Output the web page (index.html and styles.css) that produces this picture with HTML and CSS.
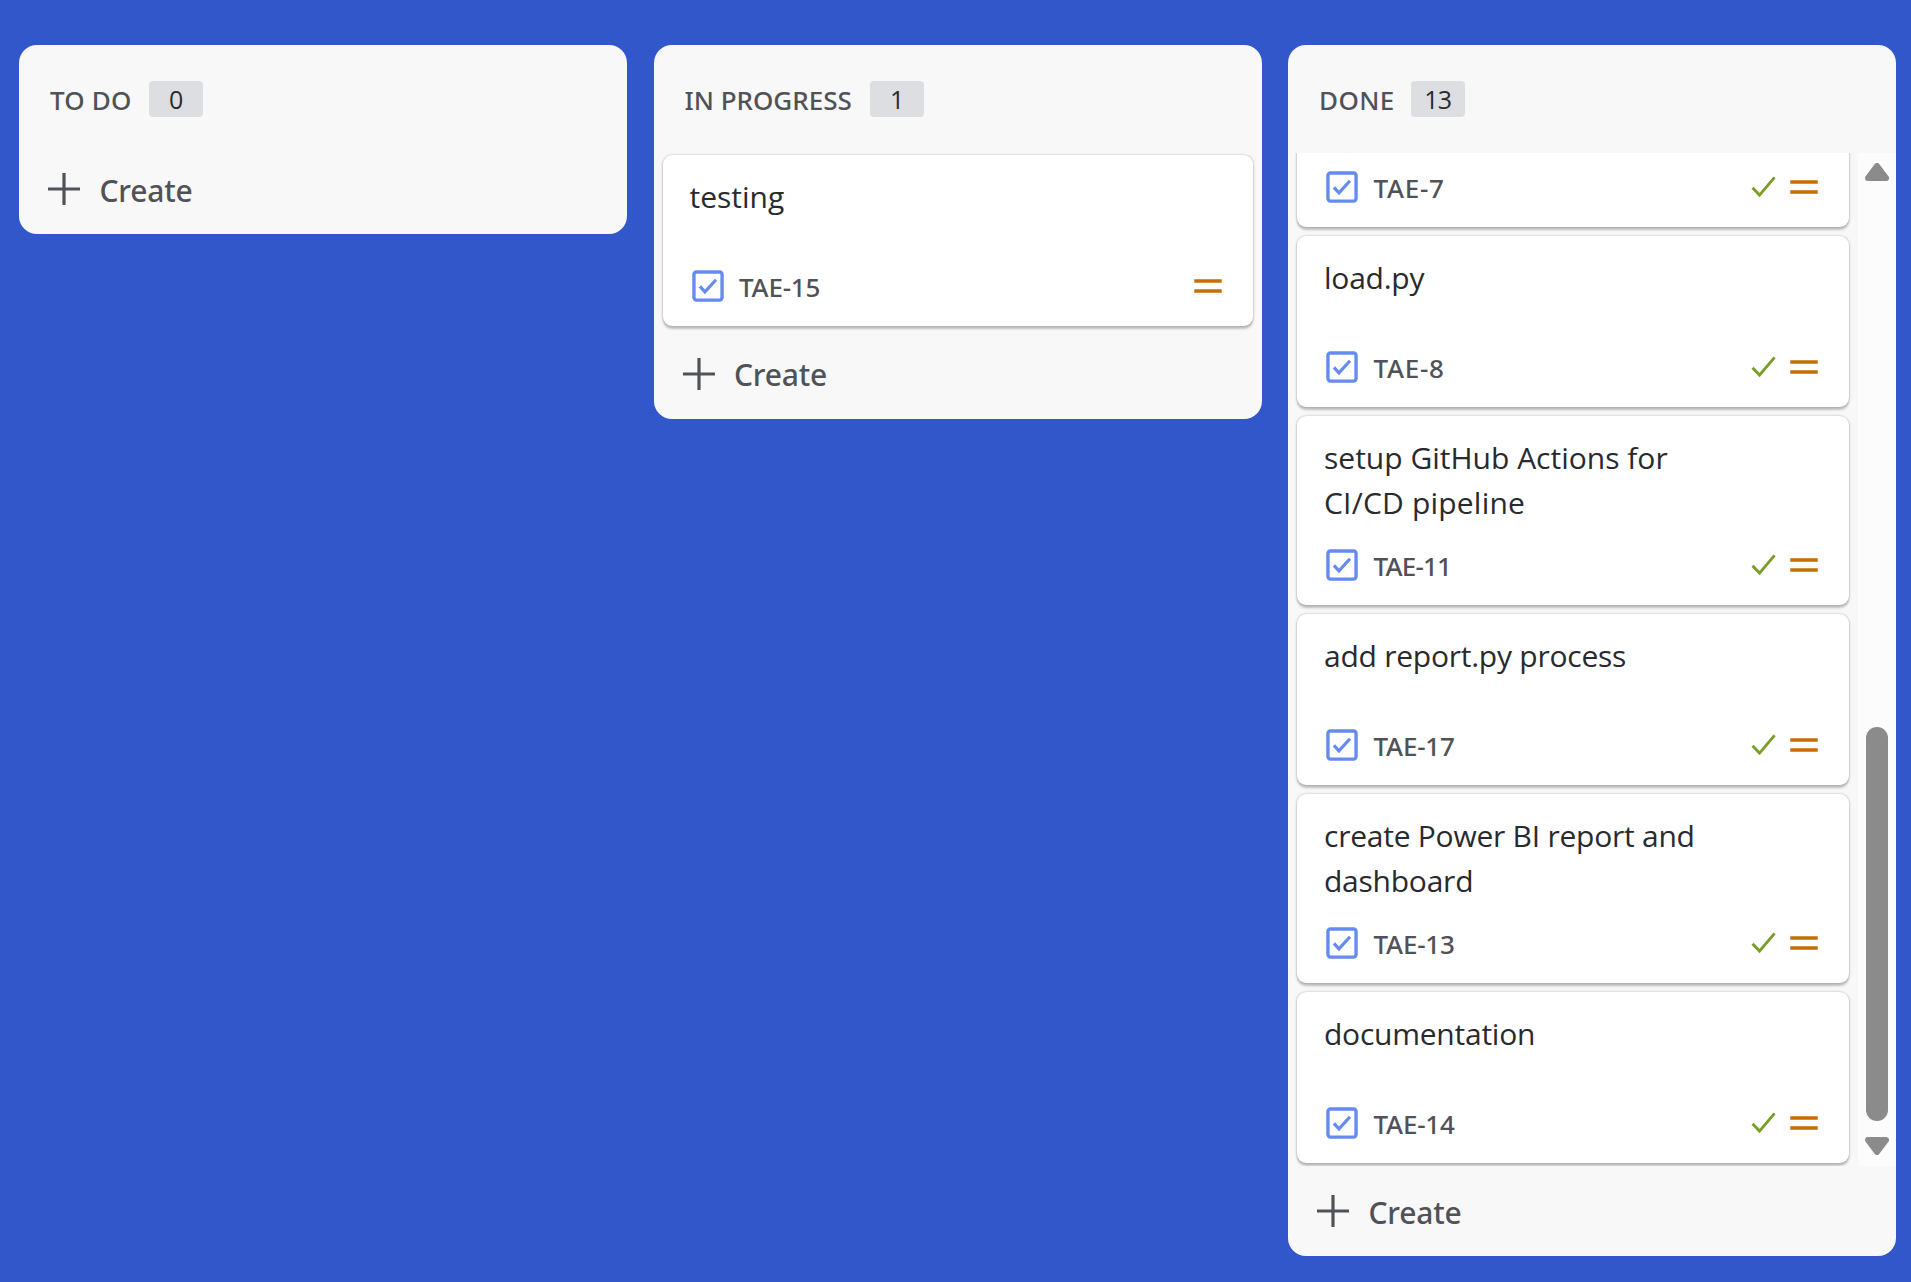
FILE: index.html
```html
<!DOCTYPE html>
<html lang="en">
<head>
<meta charset="utf-8">
<title>Board</title>
<link rel="stylesheet" href="styles.css">
</head>
<body>
<svg class="defs" aria-hidden="true">
  <symbol id="task" viewBox="0 0 16 16"><rect x="1.75" y="1.75" width="12.5" height="12.5" rx="1.1" fill="none" stroke="currentColor" stroke-width="1.5"/><path d="M4.4 8.15 6.65 10.6 11.55 5.2" fill="none" stroke="currentColor" stroke-width="1.4"/></symbol>
  <symbol id="done" viewBox="0 0 16 16"><path d="M2.9 8.3 6 11.6 12.7 3.7" fill="none" stroke="currentColor" stroke-width="1.3"/></symbol>
  <symbol id="medium" viewBox="0 0 16 16"><path d="M1.9 5.75H14.1M1.9 10.25H14.1" fill="none" stroke="currentColor" stroke-width="1.6"/></symbol>
  <symbol id="plus" viewBox="0 0 32 32"><path d="M16 0V32M0 16H32" fill="none" stroke="currentColor" stroke-width="3.2"/></symbol>
</svg>
<main class="board">
  <section class="column">
    <header class="column-header"><h2 class="name name-todo">TO DO</h2><span class="count">0</span></header>
    <button class="create"><svg class="plus"><use href="#plus"/></svg><span>Create</span></button>
  </section>

  <section class="column">
    <header class="column-header"><h2 class="name">IN PROGRESS</h2><span class="count">1</span></header>
    <div class="cards">
      <article class="card">
        <p class="title">testing</p>
        <footer class="meta"><svg class="icon task"><use href="#task"/></svg><span class="key">TAE-15</span><svg class="icon medium"><use href="#medium"/></svg></footer>
      </article>
    </div>
    <button class="create"><svg class="plus"><use href="#plus"/></svg><span>Create</span></button>
  </section>

  <section class="column column-full">
    <header class="column-header"><h2 class="name name-done">DONE</h2><span class="count">13</span></header>
    <div class="scroller">
      <div class="cards cards-scrolled">
        <article class="card">
          <footer class="meta"><svg class="icon task"><use href="#task"/></svg><span class="key key-short">TAE-7</span><svg class="icon done"><use href="#done"/></svg><svg class="icon medium"><use href="#medium"/></svg></footer>
        </article>
        <article class="card">
          <p class="title tight">load.py</p>
          <footer class="meta"><svg class="icon task"><use href="#task"/></svg><span class="key key-short">TAE-8</span><svg class="icon done"><use href="#done"/></svg><svg class="icon medium"><use href="#medium"/></svg></footer>
        </article>
        <article class="card">
          <p class="title">setup GitHub Actions for <span class="wide">CI/CD pipeline</span></p>
          <footer class="meta"><svg class="icon task"><use href="#task"/></svg><span class="key key-ones">TAE-11</span><svg class="icon done"><use href="#done"/></svg><svg class="icon medium"><use href="#medium"/></svg></footer>
        </article>
        <article class="card">
          <p class="title tight">add report.py process</p>
          <footer class="meta"><svg class="icon task"><use href="#task"/></svg><span class="key">TAE-17</span><svg class="icon done"><use href="#done"/></svg><svg class="icon medium"><use href="#medium"/></svg></footer>
        </article>
        <article class="card">
          <p class="title tight">create Power BI report and dashboard</p>
          <footer class="meta"><svg class="icon task"><use href="#task"/></svg><span class="key">TAE-13</span><svg class="icon done"><use href="#done"/></svg><svg class="icon medium"><use href="#medium"/></svg></footer>
        </article>
        <article class="card">
          <p class="title tight">documentation</p>
          <footer class="meta"><svg class="icon task"><use href="#task"/></svg><span class="key">TAE-14</span><svg class="icon done"><use href="#done"/></svg><svg class="icon medium"><use href="#medium"/></svg></footer>
        </article>
      </div>
      <div class="scrollbar">
        <svg class="arrow" viewBox="0 0 24 18"><path d="M12 3 21 15H3Z"/></svg>
        <div class="thumb"></div>
        <svg class="arrow" viewBox="0 0 24 18"><path d="M12 15 21 3H3Z"/></svg>
      </div>
    </div>
    <button class="create"><svg class="plus"><use href="#plus"/></svg><span>Create</span></button>
  </section>
</main>
</body>
</html>
```
FILE: styles.css
```css
* { box-sizing: border-box; }

body {
  margin: 0;
  height: 1282px;
  overflow: hidden;
  background: #3257cb;
  color: #292a2e;
  font-family: "Open Sans", "Noto Sans", sans-serif;
}

.defs { display: none; }

.board {
  display: grid;
  grid-template-columns: repeat(3, 608px);
  gap: 26.5px;
  align-items: start;
  padding: 45px 0 0 19px;
}

.column {
  display: flex;
  flex-direction: column;
  overflow: hidden;
  border-radius: 18px;
  background: #f8f8f8;
}

.column-full { height: 1211px; }

.column-header {
  display: flex;
  flex: none;
  align-items: center;
  gap: 18px;
  height: 108px;
  padding-left: 31px;
}

.name {
  margin: 0;
  padding-top: 2px;
  color: #505258;
  font: 500 26px/36px "Noto Sans", sans-serif;
}

.name-todo { margin-right: -1px; letter-spacing: 0.2px; }
.name-done { margin-right: -2px; letter-spacing: 0.4px; }

.count {
  width: 54px;
  height: 36px;
  border-radius: 4px;
  background: #dddee1;
  font-size: 25px;
  line-height: 36px;
  letter-spacing: -0.8px;
  text-align: center;
}

.cards {
  display: flex;
  flex-direction: column;
  gap: 9px;
  padding: 2px 9px 3px;
}

.card {
  display: flex;
  flex: none;
  flex-direction: column;
  justify-content: space-between;
  min-height: 171px;
  padding: 19px 27px 22px;
  border-radius: 9px;
  background: #fff;
  box-shadow: 0 2.25px 2.25px rgba(30, 31, 33, 0.25), 0 0 2.25px rgba(30, 31, 33, 0.31);
}

.title {
  width: 400px;
  margin: 0 0 22px;
  font-size: 30px;
  line-height: 45px;
}

.tight { letter-spacing: -0.24px; }
.wide { letter-spacing: 0.2px; }

.meta {
  display: flex;
  align-items: center;
  height: 36px;
  margin-top: auto;
}

.icon { flex: none; width: 36px; height: 36px; }
.task { color: #668bee; }
.done { margin-right: 4px; color: #7b9e2b; }
.medium { color: #c66d04; }

.key {
  margin: 0 auto 0 13.5px;
  padding-top: 1.5px;
  color: #505258;
  font: 500 26px/36px "Noto Sans", sans-serif;
  letter-spacing: -0.2px;
}

.key-short { letter-spacing: 0.7px; }
.key-ones { letter-spacing: -0.8px; }

.create {
  display: flex;
  flex: none;
  align-items: center;
  gap: 19.5px;
  height: 90px;
  margin-top: -9px;
  padding: 0 29px;
  border: 0;
  background: none;
  color: #505258;
  font: 500 30px/36px "Noto Sans", sans-serif;
  letter-spacing: -0.2px;
}

.cards + .create,
.scroller + .create { margin-top: 0; }

.create span { padding-top: 3px; }
.cards + .create span { padding-top: 1px; }
.plus { width: 32px; height: 32px; }

.scroller {
  display: flex;
  height: 1013px;
  overflow: hidden;
}

.cards-scrolled {
  flex: 1;
  justify-content: flex-end;
}

.scrollbar {
  display: flex;
  flex: none;
  flex-direction: column;
  align-items: center;
  justify-content: flex-end;
  width: 38px;
  padding: 10px 0 11px;
  background: #fcfcfc;
}

.arrow {
  flex: none;
  width: 24px;
  height: 18px;
  fill: #8b8b8b;
  stroke: #8b8b8b;
  stroke-width: 6;
  stroke-linejoin: round;
}

.thumb {
  width: 22px;
  height: 394px;
  margin: auto 0 16.5px;
  border-radius: 11px;
  background: #8b8b8b;
}
```
